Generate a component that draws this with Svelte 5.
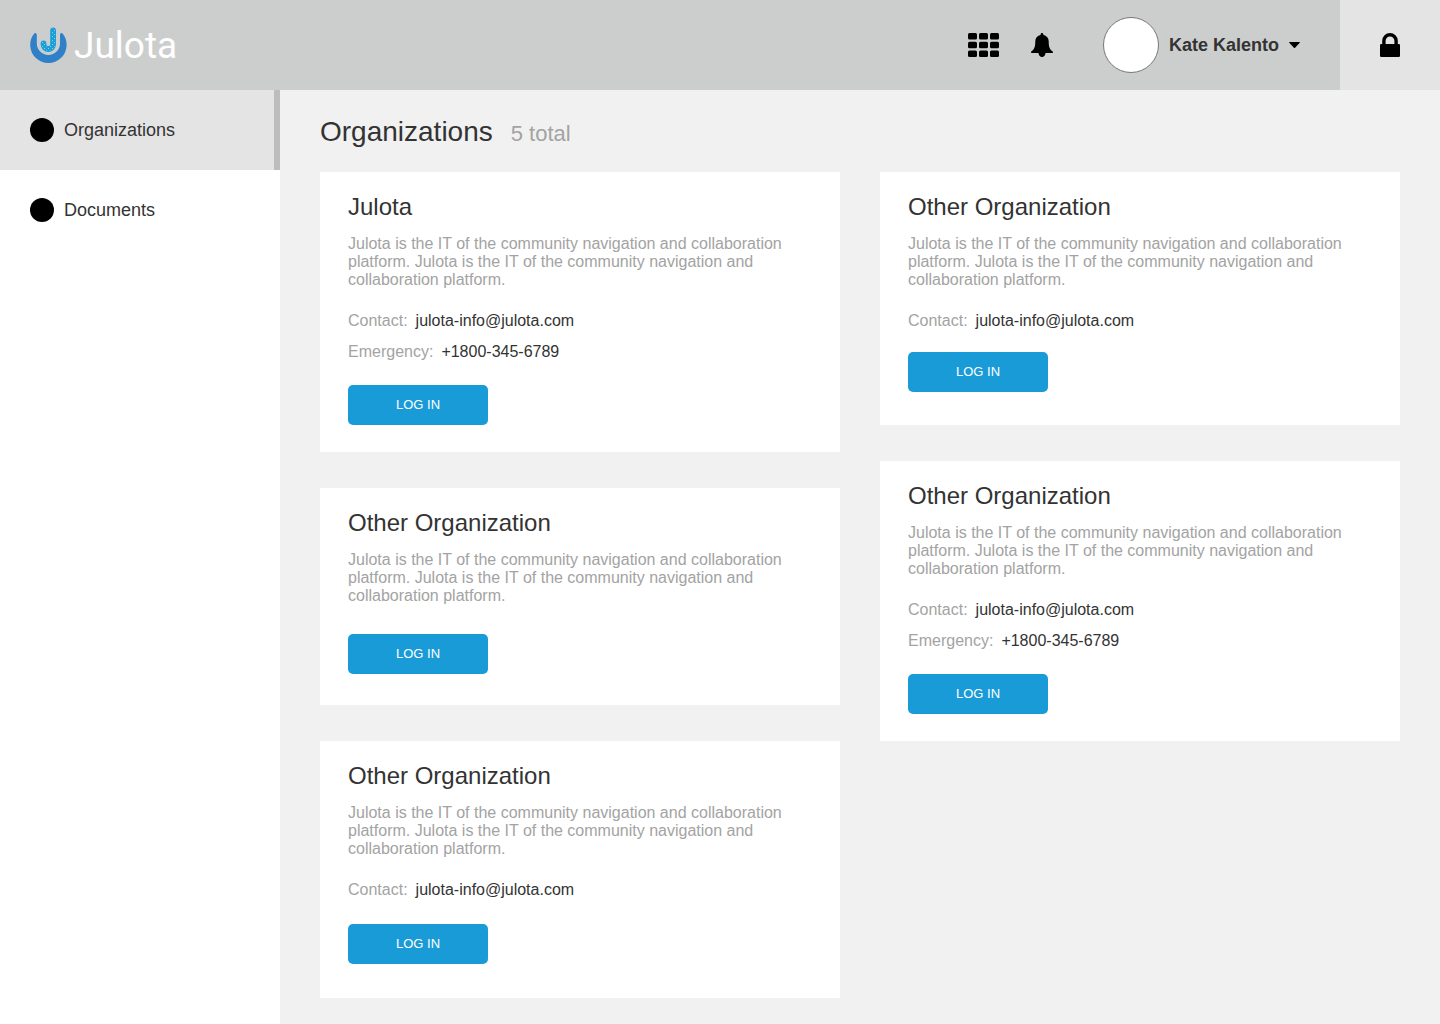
<script>
  const about =
    'Julota is the IT of the community navigation and collaboration platform. Julota is the IT of the community navigation and collaboration platform.';
  const email = 'julota-info@julota.com';
  const phone = '+1800-345-6789';

  const columns = [
    [
      { name: 'Julota', email, phone, spacing: 'full' },
      { name: 'Other Organization', spacing: 'bare' },
      { name: 'Other Organization', email, spacing: 'roomy' }
    ],
    [
      { name: 'Other Organization', email, spacing: 'compact' },
      { name: 'Other Organization', email, phone, spacing: 'full' }
    ]
  ];
  const total = columns.flat().length;

  const menu = [
    { label: 'Organizations', active: true },
    { label: 'Documents', active: false }
  ];
  const cells = [0, 1, 2].flatMap((row) => [0, 1, 2].map((col) => ({ row, col })));
</script>

<header>
  <a class="logo" href="#home">
    <svg width="38" height="38" viewBox="0 0 38 38" aria-hidden="true">
      <defs>
        <pattern id="dots" width="4" height="4" patternUnits="userSpaceOnUse">
          <rect width="4" height="4" fill="#1a9fda" />
          <rect width="1" height="1" fill="#8fcde6" />
          <rect x="2" y="2" width="1" height="1" fill="#8fcde6" />
        </pattern>
      </defs>
      <path
        d="M4.400 7.200A18.200 18.200 0 1 0 32.400 7.200Q30.200 6.200 30 9V17.300A11.600 11.600 0 0 1 6.800 17.300V9Q6.600 6.200 4.400 7.200Z"
        fill="#2f80c9"
      />
      <g fill="none" stroke-linecap="round">
        <path d="M23.100 4.500V18.200A4.800 4.800 0 0 1 13.500 18.200V17.500" stroke="#1a9fda" stroke-width="5.800" />
        <path d="M23.100 4.500V18.200A4.800 4.800 0 0 1 13.500 18.200V17.500" stroke="url(#dots)" stroke-width="4" />
      </g>
    </svg>
    <span>Julota</span>
  </a>
  <div class="tools">
    <button class="tool" aria-label="Apps">
      <svg width="31" height="24" viewBox="0 0 31 24">
        {#each cells as { row, col }}
          <rect x={col * 11} y={row * 8.7} width="9" height="6.6" rx="1.5" />
        {/each}
      </svg>
    </button>
    <button class="tool" aria-label="Notifications">
      <svg width="22" height="24" viewBox="0 0 22 24">
        <path
          d="M11 0c.8 0 1.400.6 1.400 1.500v.4c3.300.6 5.300 3 5.300 6.400 0 5 .8 8.300 4.100 10.300.5.500.2 1.400-.5 1.400H14.500c0 2.200-1.500 4-3.500 4s-3.500-1.800-3.500-4H.7c-.7 0-1-.9-.5-1.400C3.500 16.600 4.300 13.300 4.300 8.300c0-3.400 2-5.800 5.300-6.400v-.4C9.600.6 10.200 0 11 0Z"
        />
      </svg>
    </button>
    <button class="user">
      <span class="avatar"></span>
      <span>Kate Kalento</span>
      <svg width="11" height="6" viewBox="0 0 11 6" aria-hidden="true">
        <path d="M.7 0h9.600q.9 0 .4.700L6.100 5.700q-.6.500-1.200 0L.3.700Q-.2 0 .7 0Z" />
      </svg>
    </button>
    <button class="lock" aria-label="Lock">
      <svg width="20" height="24" viewBox="0 0 20 24">
        <path
          fill-rule="evenodd"
          d="M2.200 11V7.800a7.800 7.800 0 0 1 15.600 0V11h1q1.200 0 1.200 1.200v10.600q0 1.200-1.200 1.200H1.200Q0 24 0 22.800V12.200Q0 11 1.200 11ZM5.600 11h8.800V7.800a4.400 4.400 0 0 0-8.800 0Z"
        />
      </svg>
    </button>
  </div>
</header>

<div class="body">
  <nav>
    {#each menu as item}
      <a href="#{item.label.toLowerCase()}" class:active={item.active}>
        <span class="dot"></span>
        {item.label}
      </a>
    {/each}
  </nav>

  <main>
    <div class="heading">
      <h1>Organizations</h1>
      <span>{total} total</span>
    </div>
    <div class="columns">
      {#each columns as column}
        <div class="column">
          {#each column as org}
            <article class={org.spacing}>
              <h2>{org.name}</h2>
              <p>{about}</p>
              {#if org.email}
                <dl>
                  <div>
                    <dt>Contact:</dt>
                    <dd><a href="mailto:{org.email}">{org.email}</a></dd>
                  </div>
                  {#if org.phone}
                    <div>
                      <dt>Emergency:</dt>
                      <dd><a href="tel:{org.phone}">{org.phone}</a></dd>
                    </div>
                  {/if}
                </dl>
              {/if}
              <button class="login">LOG IN</button>
            </article>
          {/each}
        </div>
      {/each}
    </div>
  </main>
</div>

<style>
  :global(body) {
    background: #f1f1f1;
    color: #333;
    font-family: 'Liberation Sans', Arial, sans-serif;
  }
  :global(#app) {
    display: flex;
    flex-direction: column;
    min-height: 100vh;
  }
  button {
    border: 0;
    padding: 0;
    background: none;
    color: inherit;
    font-family: inherit;
    cursor: pointer;
  }
  a {
    color: inherit;
    text-decoration: none;
  }
  svg {
    display: block;
    fill: #000;
  }
  h1,
  h2,
  p,
  dl,
  dd {
    margin: 0;
    font-weight: 400;
  }

  header {
    display: flex;
    justify-content: space-between;
    height: 90px;
    background: #cccecd;
  }
  .logo {
    display: flex;
    align-items: center;
    gap: 6px;
    padding-left: 30px;
    color: #fff;
    font-family: Roboto, sans-serif;
    font-size: 37px;
    line-height: 45px;
  }
  .tools {
    display: flex;
    align-items: stretch;
  }
  .tool {
    margin-right: 32px;
  }
  .user {
    display: flex;
    align-items: center;
    gap: 10px;
    margin: 0 40px 0 18px;
    font-size: 18px;
    font-weight: 700;
  }
  .avatar {
    box-sizing: border-box;
    width: 56px;
    height: 56px;
    border: 1px solid #777;
    border-radius: 50%;
    background: #fff;
  }
  .lock {
    display: grid;
    place-items: center;
    width: 100px;
    background: #e4e4e4;
  }

  .body {
    display: flex;
    flex: 1;
  }
  nav {
    flex: 0 0 280px;
    background: #fff;
  }
  nav a {
    display: flex;
    align-items: center;
    gap: 10px;
    box-sizing: border-box;
    height: 80px;
    padding-left: 30px;
    font-size: 18px;
  }
  nav a.active {
    border-right: 6px solid #bdbdbd;
    background: #e4e4e4;
  }
  .dot {
    width: 24px;
    height: 24px;
    border-radius: 50%;
    background: #000;
  }

  main {
    flex: 1;
    padding: 26px 40px;
  }
  .heading {
    display: flex;
    align-items: baseline;
    gap: 18px;
    margin-bottom: 24px;
  }
  h1 {
    font-size: 28px;
    line-height: 32px;
  }
  .heading span {
    color: #a3a3a3;
    font-size: 22px;
    line-height: 26px;
  }
  .columns {
    display: grid;
    grid-template-columns: 1fr 1fr;
    align-items: start;
    gap: 40px;
  }
  .column {
    display: grid;
    gap: 36px;
  }
  article {
    padding: 21px 28px 27px;
    background: #fff;
  }
  h2 {
    margin-bottom: 14px;
    font-size: 24px;
    line-height: 28px;
  }
  p {
    color: #a3a3a3;
    font-size: 16px;
    line-height: 18px;
  }
  dl {
    display: grid;
    gap: 13px;
    margin-top: 23px;
    font-size: 16px;
    line-height: 18px;
  }
  dl div {
    display: flex;
    gap: 8px;
  }
  dt {
    color: #a3a3a3;
  }
  .login {
    display: block;
    width: 140px;
    height: 40px;
    margin-top: 24px;
    padding-bottom: 2px;
    border-radius: 5px;
    background: #199bd7;
    color: #fff;
    font-size: 13px;
  }
  .compact {
    padding-bottom: 33px;
  }
  .compact .login {
    margin-top: 22px;
  }
  .bare {
    padding-bottom: 31px;
  }
  .bare .login {
    margin-top: 29px;
  }
  .roomy {
    padding-bottom: 34px;
  }
  .roomy .login {
    margin-top: 25px;
  }
</style>
